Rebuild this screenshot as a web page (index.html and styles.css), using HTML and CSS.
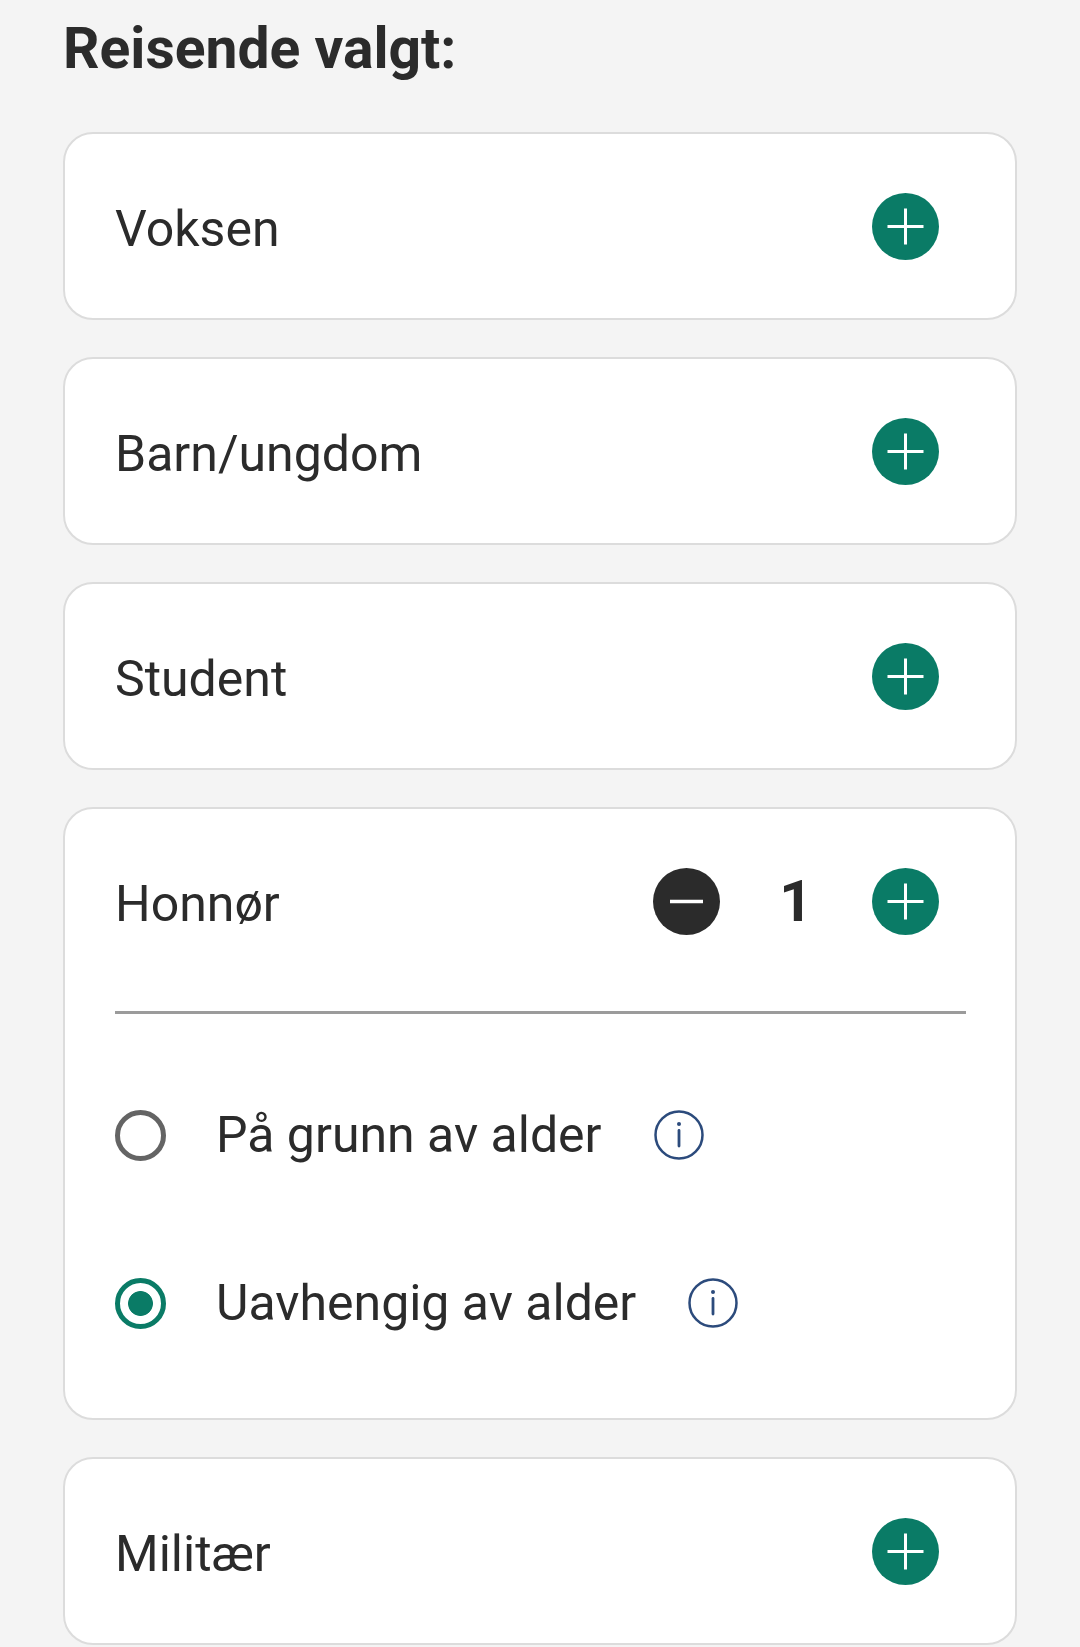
FILE: index.html
```html
<!DOCTYPE html>
<html lang="no">
<head>
<meta charset="utf-8">
<title>Reisende</title>
<link rel="stylesheet" href="styles.css">
</head>
<body>

<div class="page">

<h1>Reisende valgt:</h1>

<div class="card">
	<div class="row">
		<span class="label">Voksen</span>
		<div class="counter">
			<button class="btn" aria-label="Legg til">
				<svg width="67" height="67" viewBox="0 0 67 67"><circle cx="33.5" cy="33.5" r="33.5" fill="#0a7b66"/><path d="M15.5 33.5h36M33.5 15.5v36" stroke="#fff" stroke-width="3"/></svg>
			</button>
		</div>
	</div>
</div>

<div class="card">
	<div class="row">
		<span class="label">Barn/ungdom</span>
		<div class="counter">
			<button class="btn" aria-label="Legg til">
				<svg width="67" height="67" viewBox="0 0 67 67"><circle cx="33.5" cy="33.5" r="33.5" fill="#0a7b66"/><path d="M15.5 33.5h36M33.5 15.5v36" stroke="#fff" stroke-width="3"/></svg>
			</button>
		</div>
	</div>
</div>

<div class="card">
	<div class="row">
		<span class="label">Student</span>
		<div class="counter">
			<button class="btn" aria-label="Legg til">
				<svg width="67" height="67" viewBox="0 0 67 67"><circle cx="33.5" cy="33.5" r="33.5" fill="#0a7b66"/><path d="M15.5 33.5h36M33.5 15.5v36" stroke="#fff" stroke-width="3"/></svg>
			</button>
		</div>
	</div>
</div>

<div class="card">
	<div class="row">
		<span class="label">Honnør</span>
		<div class="counter">
			<button class="btn" aria-label="Fjern">
				<svg width="67" height="67" viewBox="0 0 67 67"><circle cx="33.5" cy="33.5" r="33.5" fill="#2b2b2b"/><path d="M17 33.5h33" stroke="#fff" stroke-width="3.5"/></svg>
			</button>
			<span class="count">1</span>
			<button class="btn" aria-label="Legg til">
				<svg width="67" height="67" viewBox="0 0 67 67"><circle cx="33.5" cy="33.5" r="33.5" fill="#0a7b66"/><path d="M15.5 33.5h36M33.5 15.5v36" stroke="#fff" stroke-width="3"/></svg>
			</button>
		</div>
	</div>
	<hr class="divider">
	<div class="options">
		<label class="option">
			<input type="radio" name="honnor">
			<span>På grunn av alder</span>
			<svg class="info" width="50" height="50" viewBox="0 0 50 50"><circle cx="25" cy="25" r="23.5" fill="none" stroke="#2c4b7c" stroke-width="2.5"/><circle cx="25" cy="14" r="2" fill="#2c4b7c"/><path d="M25 20.5v15.5" stroke="#2c4b7c" stroke-width="2.8" stroke-linecap="round"/></svg>
		</label>
		<label class="option">
			<input type="radio" name="honnor" checked>
			<span>Uavhengig av alder</span>
			<svg class="info" width="50" height="50" viewBox="0 0 50 50"><circle cx="25" cy="25" r="23.5" fill="none" stroke="#2c4b7c" stroke-width="2.5"/><circle cx="25" cy="14" r="2" fill="#2c4b7c"/><path d="M25 20.5v15.5" stroke="#2c4b7c" stroke-width="2.8" stroke-linecap="round"/></svg>
		</label>
	</div>
</div>

<div class="card">
	<div class="row">
		<span class="label">Militær</span>
		<div class="counter">
			<button class="btn" aria-label="Legg til">
				<svg width="67" height="67" viewBox="0 0 67 67"><circle cx="33.5" cy="33.5" r="33.5" fill="#0a7b66"/><path d="M15.5 33.5h36M33.5 15.5v36" stroke="#fff" stroke-width="3"/></svg>
			</button>
		</div>
	</div>
</div>

</div>

</body>
</html>
```

FILE: styles.css
```css
body {
	margin: 0;
	background-color: #f4f4f4;
	font-family: Roboto, "Liberation Sans", sans-serif;
	color: #2b2b2b;
}
.page {
	padding: 15px 63px 0 63px;
}
h1 {
	margin: 0 0 50px;
	font-size: 57px;
	line-height: 67px;
	font-weight: 700;
}
.card {
	background-color: #ffffff;
	border: 2px solid #dcdcdc;
	border-radius: 30px;
	margin-bottom: 37px;
}
.row {
	display: flex;
	align-items: center;
	justify-content: space-between;
	height: 184px;
	padding: 0 76px 0 50px;
}
.label {
	font-size: 50px;
	padding-top: 6px;
}
.counter {
	display: flex;
	align-items: center;
}
.btn {
	display: block;
	width: 67px;
	height: 67px;
	padding: 0;
	border: 0;
	background: none;
}
.btn svg {
	display: block;
}
.count {
	width: 152px;
	text-align: center;
	font-size: 58px;
	font-weight: 700;
}
.divider {
	height: 3px;
	margin: 18px 49px 0 50px;
	border: 0;
	background-color: #9b9b9b;
}
.options {
	padding: 37px 50px 31px;
}
.option {
	display: flex;
	align-items: center;
	height: 168px;
	font-size: 50px;
}
.option input {
	appearance: none;
	-webkit-appearance: none;
	flex-shrink: 0;
	width: 51px;
	height: 51px;
	margin: 0 50px 0 0;
	border: 5px solid #646464;
	border-radius: 50%;
	background: #ffffff;
}
.option input:checked {
	border-color: #0a7b66;
	background: radial-gradient(circle, #0a7b66 0 12px, #ffffff 12.8px);
}
.info {
	display: block;
	flex-shrink: 0;
	margin-left: 52px;
}
```
